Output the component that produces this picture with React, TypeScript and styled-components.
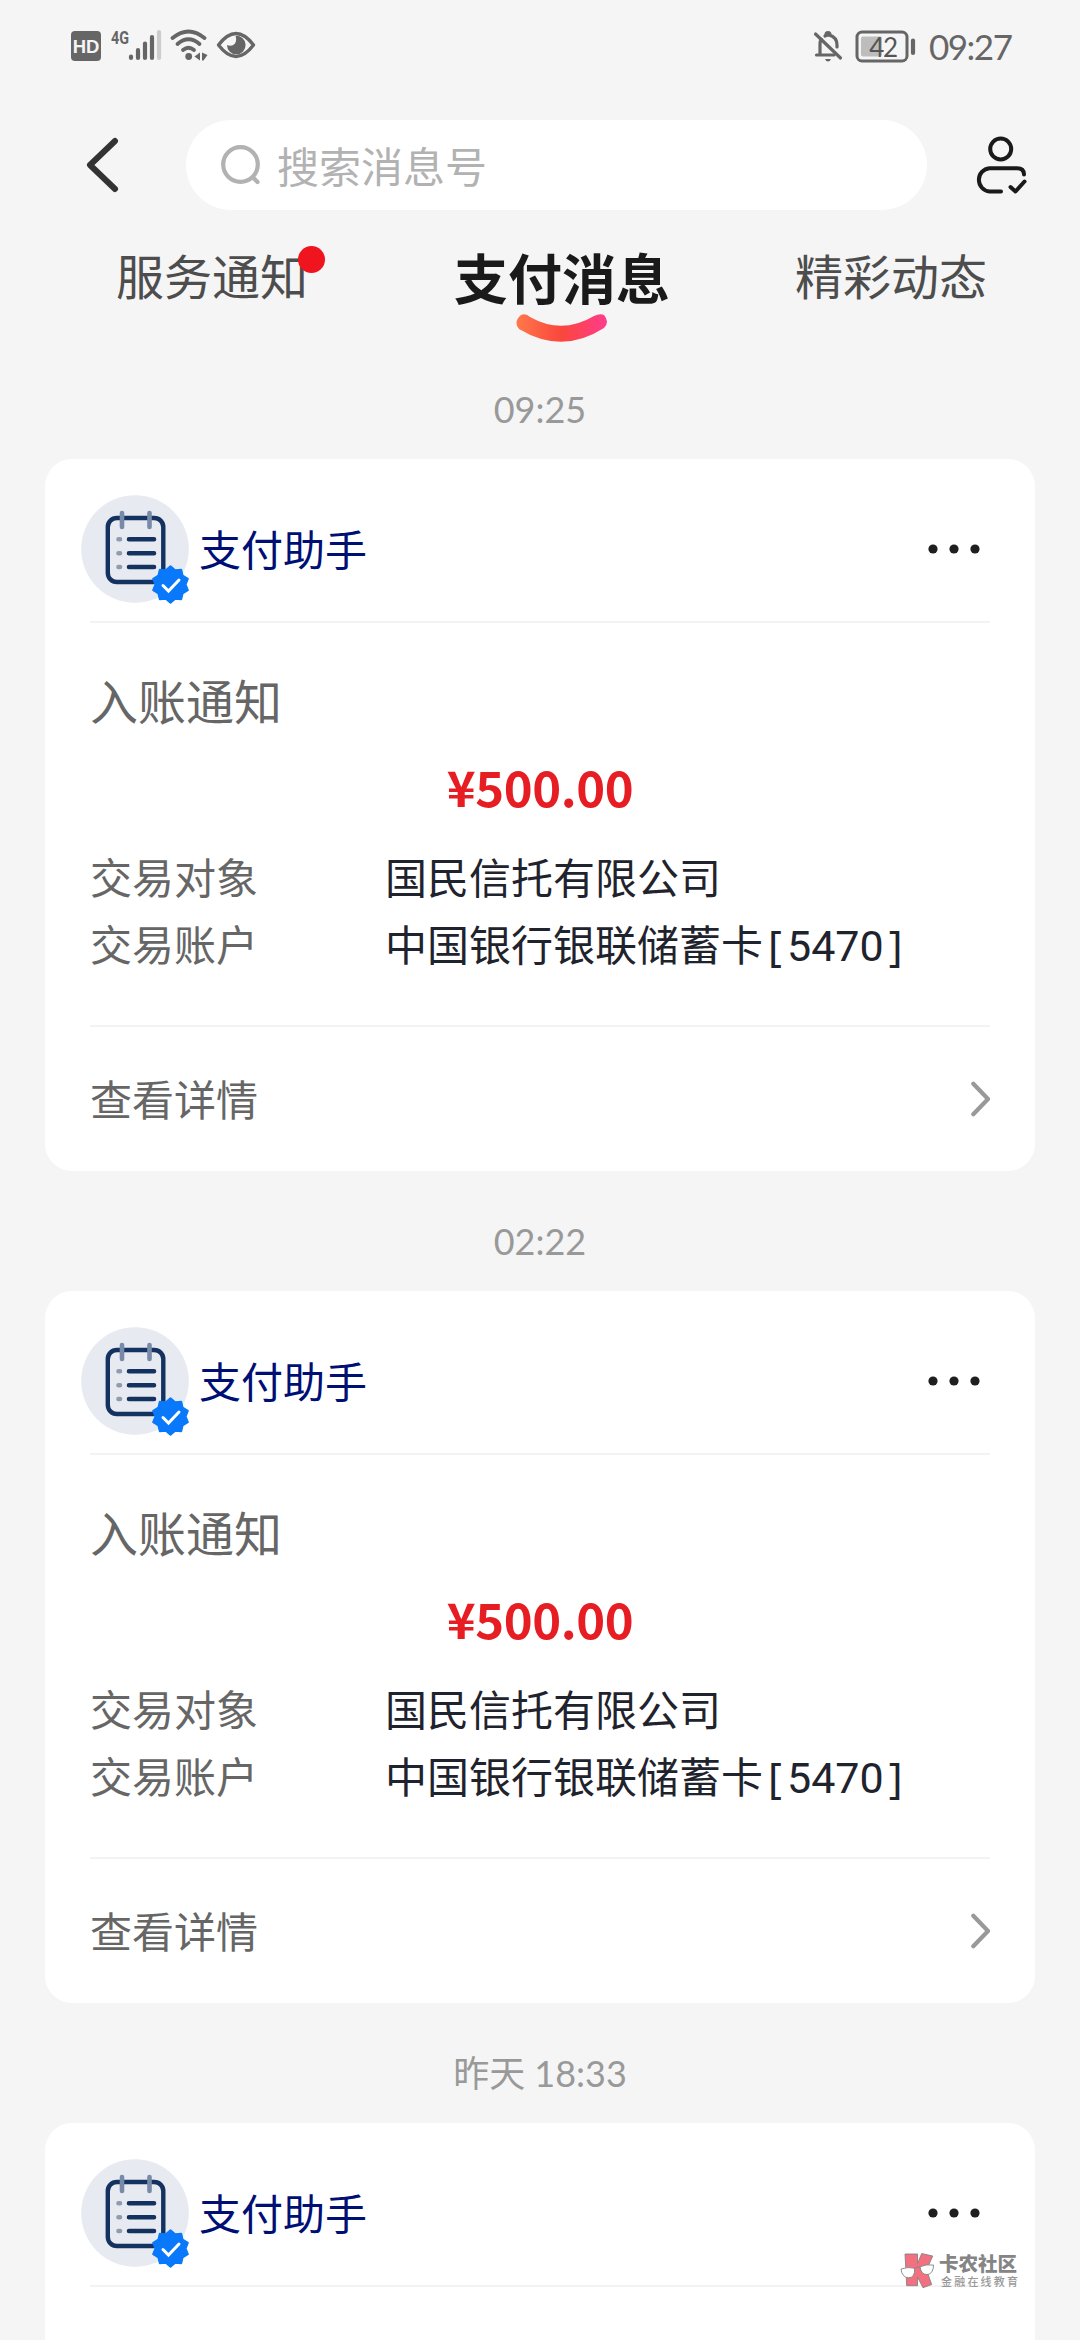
import React from "react";
import styled, { createGlobalStyle } from "styled-components";

const GlobalStyle = createGlobalStyle`
  * { box-sizing: border-box; }
  html, body { margin: 0; padding: 0; background: #f5f5f5; }
  body { font-family: "Noto Sans CJK SC", sans-serif; }
`;

const Screen = styled.div`
  width: 1080px;
  height: 2340px;
  overflow: hidden;
  position: relative;
  display: flex;
  flex-direction: column;
  background: #f5f5f5;
`;

const StatusBar = styled.div`
  height: 90px;
  flex: none;
  padding: 2px 66px 0 70px;
  display: flex;
  justify-content: space-between;
  align-items: center;
`;

const StatusGroup = styled.div<{ $gap?: number }>`
  display: flex;
  align-items: center;
  gap: ${(p) => p.$gap ?? 0}px;
`;

const Clock = styled.span`
  width: 85px;
  font-family: Lato, "Noto Sans", sans-serif;
  font-size: 35px;
  line-height: 48px;
  letter-spacing: -1.5px;
  white-space: nowrap;
  color: #666;
`;

const Header = styled.header`
  height: 150px;
  flex: none;
  padding: 30px 52px 30px 86px;
  display: flex;
  align-items: center;
`;

const SearchBox = styled.div`
  width: 741px;
  height: 90px;
  margin-left: 67px;
  margin-right: 47px;
  border-radius: 45px;
  background: #fff;
  display: flex;
  align-items: center;
  padding-left: 34px;
  gap: 15px;
`;

const Placeholder = styled.span`
  font-size: 42px;
  line-height: 60px;
  padding-bottom: 1px;
  color: #b2b2b2;
`;

const Tabs = styled.nav`
  height: 99px;
  flex: none;
  display: flex;
  padding-left: 116px;
`;

const Tab = styled.div<{ $active?: boolean }>`
  position: relative;
  font-size: ${(p) => (p.$active ? 54 : 48)}px;
  font-weight: ${(p) => (p.$active ? 700 : 400)};
  line-height: ${(p) => (p.$active ? 73 : 68)}px;
  margin: ${(p) => (p.$active ? "0 125px 0 146px" : "0")};
  color: ${(p) => (p.$active ? "#1a1a1a" : "#4d4d4d")};
`;

const RedDot = styled.i`
  position: absolute;
  left: 182px;
  top: 6px;
  width: 27px;
  height: 27px;
  border-radius: 50%;
  background: #f0141e;
`;

const Smile = styled.svg`
  position: absolute;
  left: 50%;
  top: 73px;
  margin-left: -46px;
`;

const Feed = styled.main`
  display: flex;
  flex-direction: column;
`;

const TimeStamp = styled.div`
  height: 120px;
  padding-top: 44px;
  text-align: center;
  font-family: Lato, "Noto Sans CJK SC", sans-serif;
  font-size: 36px;
  line-height: 52px;
  color: #999;
`;

const Card = styled.section`
  width: 990px;
  height: 712px;
  flex: none;
  margin: 0 auto;
  padding: 0 45px;
  border-radius: 27px;
  background: #fff;
`;

const CardHead = styled.div`
  height: 164px;
  display: flex;
  align-items: center;
  padding: 17px 0 0;
  border-bottom: 2px solid #f3f3f3;
`;

const Avatar = styled.svg`
  flex: none;
  margin: 2px 0 0 -9px;
`;

const Sender = styled.span`
  font-size: 42px;
  line-height: 60px;
  padding-bottom: 2px;
  color: #000f73;
  margin-left: 9px;
  flex: 1;
`;

const Body = styled.div`
  height: 404px;
  padding-top: 40px;
  border-bottom: 2px solid #f3f3f3;
`;

const Title = styled.h2`
  margin: 0;
  font-size: 48px;
  font-weight: 400;
  line-height: 72px;
  color: #666;
`;

const Amount = styled.div`
  margin-top: 15px;
  font-size: 49px;
  font-weight: 700;
  line-height: 72px;
  letter-spacing: -0.4px;
  text-align: center;
  color: #e61e23;
`;

const Fields = styled.dl`
  margin: 20px 0 0;
  display: grid;
  grid-template-columns: 295px 1fr;
  font-size: 42px;
  line-height: 67px;
`;

const Label = styled.dt`
  color: #666;
`;

const Value = styled.dd`
  margin: 0;
  height: 67px;
  color: #1f232d;
  white-space: nowrap;
`;

const AccountNo = styled.span`
  font-family: Roboto, sans-serif;
  font-size: 43px;
  line-height: 60px;
`;

const Bracket = styled.span`
  display: inline-block;
  width: 24px;
  font-family: "Noto Sans", sans-serif;
  font-size: 42px;
  line-height: 60px;
  text-align: center;
`;

const CardFoot = styled.div`
  height: 144px;
  display: flex;
  align-items: center;
  justify-content: space-between;
  color: #666;
`;

const FootLabel = styled.span`
  font-size: 42px;
  line-height: 60px;
  padding-bottom: 3px;
`;

const Watermark = styled.div`
  position: absolute;
  left: 900px;
  top: 2250px;
  display: flex;
  gap: 4px;
`;

const MarkText = styled.div`
  display: flex;
  flex-direction: column;
  padding-top: 2px;
`;

const MarkName = styled.span`
  font-size: 19.5px;
  font-weight: 900;
  line-height: 22px;
  color: #858585;
`;

const MarkSlogan = styled.span`
  font-size: 11px;
  font-weight: 500;
  line-height: 15px;
  letter-spacing: 2.2px;
  padding-left: 2px;
  color: #999;
`;

const StatusLeft = () => (
  <svg width="190" height="40" viewBox="70 26 190 40">
    <rect x="71" y="31" width="30" height="30" rx="4" fill="#666" />
    <text x="86" y="53" textAnchor="middle" fontFamily="Liberation Sans" fontWeight="700" fontSize="18.500" fill="#f5f5f5">HD</text>
    <text x="111" y="43.5" fontFamily="Roboto" fontWeight="700" fontSize="19" textLength="18" lengthAdjust="spacingAndGlyphs" fill="#666">4G</text>
    <g strokeWidth="4.2" strokeLinecap="round" stroke="#666">
      <path d="M131 56.5V58M138 50V58M145 43.5V58M152 37V58" />
      <path d="M159 32V58" stroke="#ccc" />
    </g>
    <g fill="none" stroke="#666" strokeWidth="3.8" strokeLinecap="round">
      <path d="M172.5 38Q188.500 25 204.500 38" />
      <path d="M177.500 44Q188.500 34.500 199.500 44" />
      <path d="M183 50Q188.500 45.500 194 50" />
    </g>
    <circle cx="188.700" cy="56.500" r="3.400" fill="#666" />
    <path d="M194.500 56.500L200 52.500V60.500ZM202 52.500L207.500 55L203.500 60.500H202Z" fill="#666" />
    <path d="M218.500 45Q236 22 253.500 45Q236 68 218.500 45Z" fill="none" stroke="#666" strokeWidth="3.400" strokeLinejoin="round" />
    <path d="M235.500 35.800A9.300 9.300 0 1 1 227 45Q232 47 235 43.500Q237 40 235.500 35.800Z" fill="#666" />
  </svg>
);

const BellOff = () => (
  <svg width="30" height="34" viewBox="813 28 30 34">
    <g fill="none" stroke="#666" strokeWidth="3.200" strokeLinecap="round">
      <path d="M816.500 54H834M820 53V43Q820 40 821.500 38.500M825 35Q827 34 829 34Q837 36 837 44V46" strokeLinejoin="round" />
      <path d="M826 34Q826 31.500 828 31.500T830 34" />
      <path d="M815.500 33L840.500 57" />
    </g>
    <path d="M825 58H831Q830 60.500 828 60.500T825 58Z" fill="#666" />
  </svg>
);

const Battery = () => (
  <svg width="62" height="34" viewBox="855 28 62 34">
    <rect x="857" y="31" width="50" height="29" rx="5" fill="none" stroke="#666" strokeWidth="3" />
    <rect x="861" y="35.500" width="21" height="20" rx="2" fill="#bdbdbd" />
    <path d="M913 39.500V52" stroke="#666" strokeWidth="4.200" strokeLinecap="round" />
    <text x="883" y="55.500" textAnchor="middle" fontFamily="Lato" fontSize="26" letterSpacing="-1.400" fill="#555">42</text>
  </svg>
);

const Back = () => (
  <svg width="33" height="56" viewBox="0 0 33 56">
    <path d="M29 4L4 28L29 52" fill="none" stroke="#333" strokeWidth="6" strokeLinecap="round" strokeLinejoin="round" />
  </svg>
);

const SearchIcon = () => (
  <svg width="42" height="42" viewBox="0 0 42 42">
    <g fill="none" stroke="#b2b2b2" strokeWidth="4.200" strokeLinecap="round">
      <circle cx="20.500" cy="20.500" r="17.300" />
      <path d="M33 33.500L37.500 38" />
    </g>
  </svg>
);

const Person = () => (
  <svg width="54" height="60" viewBox="0 0 54 60">
    <g fill="none" stroke="#1a1a1a" strokeWidth="4" strokeLinecap="round" strokeLinejoin="round">
      <circle cx="26.700" cy="14" r="10.500" />
      <path d="M27 56.500H15.500A11.700 11.700 0 0 1 15.500 33.200H43Q50 33.200 50 39.500" />
      <path d="M36.500 52L41.500 56.500L50.500 46.500" />
    </g>
  </svg>
);

const starPath = () => {
  const points: string[] = [];
  for (let i = 0; i < 20; i++) {
    const r = i % 2 ? 15 : 18.2;
    const a = (i * Math.PI) / 10 + Math.PI / 10;
    points.push(`${(89.5 + r * Math.cos(a)).toFixed(2)},${(89.5 + r * Math.sin(a)).toFixed(2)}`);
  }
  return points.join(" ");
};

const AssistantIcon = () => (
  <Avatar width="109" height="109" viewBox="0 0 109 109">
    <circle cx="54" cy="54" r="53.800" fill="#e7eaf0" />
    <rect x="26.800" y="23" width="55.500" height="64" rx="9" fill="none" stroke="#14325f" strokeWidth="4.400" />
    <g strokeLinecap="round" strokeWidth="4.600">
      <path d="M41 18V32M68.500 18V32" stroke="#7889aa" />
      <path d="M48 44.300H73M48 58.200H73M48 72H73" stroke="#14325f" />
      <path d="M37.500 44.300H39M37.500 58.200H39M37.500 72H39" stroke="#909bb0" />
    </g>
    <polygon points={starPath()} fill="#0a78fa" stroke="#0a78fa" strokeWidth="2" strokeLinejoin="round" />
    <path d="M82 90.500L87.500 96L98 85" fill="none" stroke="#fff" strokeWidth="3" strokeLinecap="round" />
  </Avatar>
);

const More = () => (
  <svg width="64" height="12" viewBox="0 0 64 12">
    <g fill="#1f1f1f">
      <circle cx="7" cy="6" r="4.600" />
      <circle cx="28" cy="6" r="4.600" />
      <circle cx="49" cy="6" r="4.600" />
    </g>
  </svg>
);

const Chevron = () => (
  <svg width="22" height="36" viewBox="0 0 22 36">
    <path d="M5.300 2.700L20 18L5.300 33.300" fill="none" stroke="#999" strokeWidth="4.200" strokeLinecap="round" strokeLinejoin="round" />
  </svg>
);

const MarkLogo = () => (
  <svg width="35" height="39" viewBox="0 0 35 39">
    <g stroke="#858585" strokeWidth="0.900" strokeLinejoin="round">
      <path d="M5 4H17.500V13.500L21.700 3.500L32.700 6L26.500 20L31.700 34.500L23 37.700L17.500 27V35.700H6.700Z" fill="#f2707f" />
      <path d="M1 19Q8 16.500 14.500 18.200Q15.500 27.500 8.500 27.800Q2 27.500 1 19ZM20 16.800Q26 14 33.500 15Q33.500 24 27 24.600Q21 24.500 20 16.800Z" fill="#fff" />
      <path d="M14.500 18.500Q17 16.500 20 17" fill="none" />
    </g>
  </svg>
);

type Message = { time: string; expanded: boolean };

const messages: Message[] = [
  { time: "09:25", expanded: true },
  { time: "02:22", expanded: true },
  { time: "昨天 18:33", expanded: false },
];

function MessageCard({ expanded }: { expanded: boolean }) {
  return (
    <Card>
      <CardHead>
        <AssistantIcon />
        <Sender>支付助手</Sender>
        <More />
      </CardHead>
      {expanded && (
        <>
          <Body>
            <Title>入账通知</Title>
            <Amount>¥500.00</Amount>
            <Fields>
              <Label>交易对象</Label>
              <Value>国民信托有限公司</Value>
              <Label>交易账户</Label>
              <Value>
                中国银行银联储蓄卡<Bracket>[</Bracket><AccountNo>5470</AccountNo><Bracket>]</Bracket>
              </Value>
            </Fields>
          </Body>
          <CardFoot>
            <FootLabel>查看详情</FootLabel>
            <Chevron />
          </CardFoot>
        </>
      )}
    </Card>
  );
}

export default function App() {
  return (
    <>
      <GlobalStyle />
      <Screen>
        <StatusBar>
          <StatusGroup><StatusLeft /></StatusGroup>
          <StatusGroup $gap={12}>
            <BellOff />
            <Battery />
            <Clock>09:27</Clock>
          </StatusGroup>
        </StatusBar>
        <Header>
          <Back />
          <SearchBox>
            <SearchIcon />
            <Placeholder>搜索消息号</Placeholder>
          </SearchBox>
          <Person />
        </Header>
        <Tabs>
          <Tab>服务通知<RedDot /></Tab>
          <Tab $active>
            支付消息
            <Smile width="92" height="32" viewBox="0 0 92 32">
              <defs>
                <linearGradient id="smile" x1="0" x2="1" y1="0" y2="0">
                  <stop offset="0" stopColor="#ff784b" />
                  <stop offset="0.5" stopColor="#fa463c" />
                  <stop offset="1" stopColor="#ff3c8c" />
                </linearGradient>
              </defs>
              <path d="M5 2Q10 0 14 4Q46 22 78 3Q84 0 88 2Q94 9 88 15Q46 42 3 16Q-3 9 5 2Z" fill="url(#smile)" />
            </Smile>
          </Tab>
          <Tab>精彩动态</Tab>
        </Tabs>
        <Feed>
          {messages.map(({ time, expanded }) => (
            <React.Fragment key={time}>
              <TimeStamp>{time}</TimeStamp>
              <MessageCard expanded={expanded} />
            </React.Fragment>
          ))}
        </Feed>
        <Watermark>
          <MarkLogo />
          <MarkText>
            <MarkName>卡农社区</MarkName>
            <MarkSlogan>金融在线教育</MarkSlogan>
          </MarkText>
        </Watermark>
      </Screen>
    </>
  );
}
